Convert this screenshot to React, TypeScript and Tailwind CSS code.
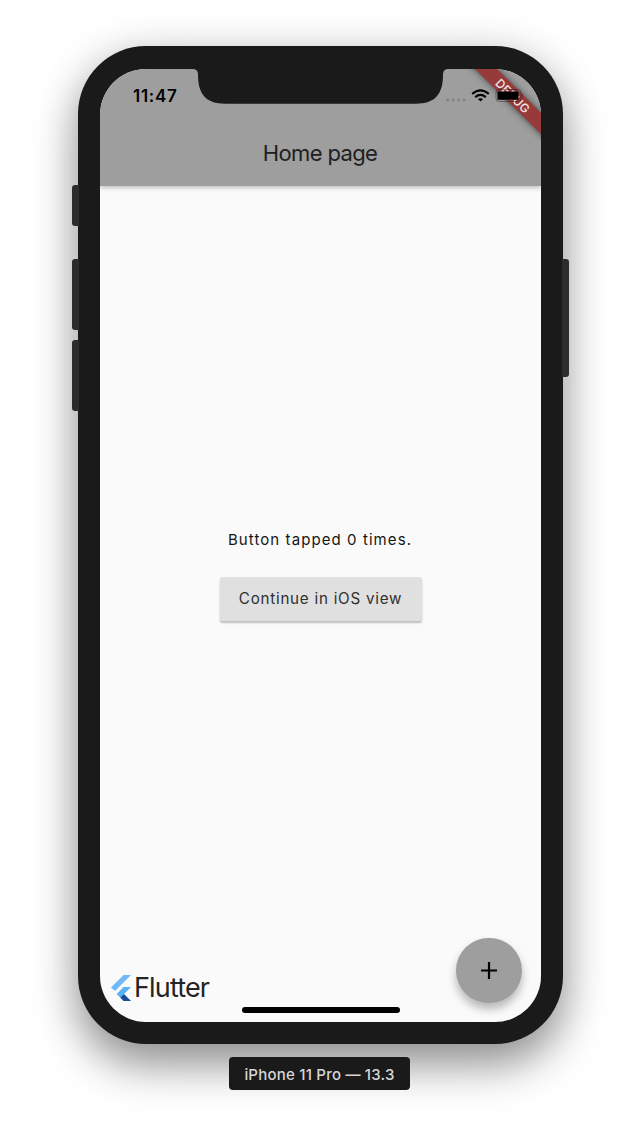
import React from "react";

function Notch() {
  return (
    <svg className="absolute left-[92px] top-0" width="257" height="35" viewBox="0 0 257 35" fill="#1a1a1a">
      <path d="M0 0H257C253 0 251 1.5 251 6C251 25 243 34.7 224 34.7H33C14 34.7 6 25 6 6C6 1.5 4 0 0 0Z" />
    </svg>
  );
}

function StatusIcons() {
  return (
    <svg className="absolute right-0 top-0" width="101" height="72" viewBox="440 69 101 72">
      <defs>
        <filter id="bannerShadow" x="-30%" y="-30%" width="160%" height="160%">
          <feGaussianBlur stdDeviation="3.6" />
        </filter>
      </defs>
      <polygon points="465,59 487,59 551,123 551,144" fill="#000" opacity="0.6" filter="url(#bannerShadow)" />
      <polygon points="475,69 497,69 541,113 541,134" fill="#963a3a" />
      <text
        transform="translate(512.6 96.2) rotate(45)"
        textAnchor="middle"
        y="4.2"
        fontFamily="Inter, sans-serif"
        fontSize="12"
        fontWeight="500"
        letterSpacing="0.3"
        fill="#f3e6e6"
      >
        DEBUG
      </text>
      <g fill="#858585">
        <circle cx="447.7" cy="99.8" r="1.6" />
        <circle cx="453.2" cy="99.8" r="1.6" />
        <circle cx="458.7" cy="99.8" r="1.6" />
        <circle cx="464.2" cy="99.8" r="1.6" />
      </g>
      <g fill="none" stroke="#000" strokeWidth="2.1">
        <path d="M472.2 93.9Q480.5 86.9 488.8 93.9" />
        <path d="M475.2 97.1Q480.5 92.7 485.8 97.1" />
      </g>
      <path d="M477.9 99.1Q480.5 97.3 483.1 99.1L480.5 101.5Z" />
      <rect x="496" y="89.5" width="25" height="12" rx="3" fill="none" stroke="#000" strokeOpacity="0.35" />
      <path d="M522 93.5Q524 95.7 522 98Z" fillOpacity="0.4" />
      <rect x="497.5" y="91.4" width="21" height="8.4" rx="0.5" />
    </svg>
  );
}

function FlutterMark() {
  return (
    <svg width="20" height="26" viewBox="0 0 20 26">
      <path d="M12.6 0H20L4 16L0 12.6Z" fill="#6fb9f8" />
      <path d="M12.6 12H20L13 19L9.2 22.6L5.6 19Z" fill="#57b0f3" />
      <path d="M9.2 22.6L13 19L20 26H12.6Z" fill="#164b9b" />
    </svg>
  );
}

export default function App() {
  return (
    <main className="flex h-[1132px] w-[640px] flex-col items-center overflow-hidden bg-white pt-[46px] font-['Inter',sans-serif]">
      <section className="relative mr-[-1px] h-[998px] w-[485px] shrink-0 rounded-[68px] bg-[#1a1a1a] px-[22px] pb-[22px] pt-[23px] shadow-[0_22px_44px_rgba(0,0,0,0.4),0_0_44px_rgba(0,0,0,0.1)]">
        <i className="absolute left-[-6px] top-[139px] h-[41px] w-[7px] rounded-l-[3px] bg-[#2c2c2c]" />
        <i className="absolute left-[-6px] top-[213px] h-[71px] w-[7px] rounded-l-[3px] bg-[#2c2c2c]" />
        <i className="absolute left-[-6px] top-[294px] h-[71px] w-[7px] rounded-l-[3px] bg-[#2c2c2c]" />
        <i className="absolute right-[-6px] top-[213px] h-[118px] w-[7px] rounded-r-[3px] bg-[#2c2c2c]" />
        <div className="relative flex h-[953px] flex-col overflow-hidden rounded-[46px] bg-[#fafafa]">
          <header className="h-[117px] shrink-0 bg-[#9e9e9e] shadow-[0_2px_4px_rgba(0,0,0,0.22)]">
            <div className="flex h-[52px] items-center pl-[33px] pt-[4px] text-[17px] font-semibold tracking-[0.7px] text-black">11:47</div>
            <h1 className="mr-[1px] flex h-[65px] items-center justify-center text-[22px] tracking-[-0.65px] text-[#202020]">Home page</h1>
          </header>
          <div className="flex grow flex-col items-center pt-[344px]">
            <p className="mr-[1px] h-[20px] whitespace-nowrap text-[15px] leading-[20px] tracking-[1.08px] text-[#151515]">Button tapped 0 times.</p>
            <button className="mt-[27px] h-[44px] w-[202px] whitespace-nowrap rounded-[2px] bg-[#e0e0e0] text-[15.2px] tracking-[0.75px] text-[#303030] shadow-[0_2px_2px_rgba(0,0,0,0.24)]">Continue in iOS view</button>
          </div>
          <footer className="flex h-[88px] shrink-0 justify-between pl-[11px] pr-[19px]">
            <div className="mt-[40px] flex h-[27px] items-center gap-[3px] self-start">
              <FlutterMark />
              <span className="text-[27px] leading-[27px] tracking-[-0.85px] text-[#242424]">Flutter</span>
            </div>
            <button aria-label="Add" className="mt-[4px] flex h-[65px] w-[66px] items-center justify-center rounded-full bg-[#9e9e9e] shadow-[0_6px_10px_rgba(0,0,0,0.28)]">
              <svg width="16" height="17" viewBox="0 0 16 17" stroke="#000" strokeWidth="2.2"><path d="M8 0V17M0 8.5H16" /></svg>
            </button>
          </footer>
          <Notch />
          <StatusIcons />
          <div className="absolute bottom-[9px] left-[142px] h-[6px] w-[158px] rounded-full bg-black" />
        </div>
      </section>
      <div className="relative mr-[1px] mt-[13px] flex h-[33px] w-[181px] items-center justify-center whitespace-nowrap rounded-[4px] bg-[#1a1a1a] pt-[3px] text-[15px] font-medium tracking-[0.22px] text-[#d6d6d6]">iPhone 11 Pro — 13.3</div>
    </main>
  );
}
